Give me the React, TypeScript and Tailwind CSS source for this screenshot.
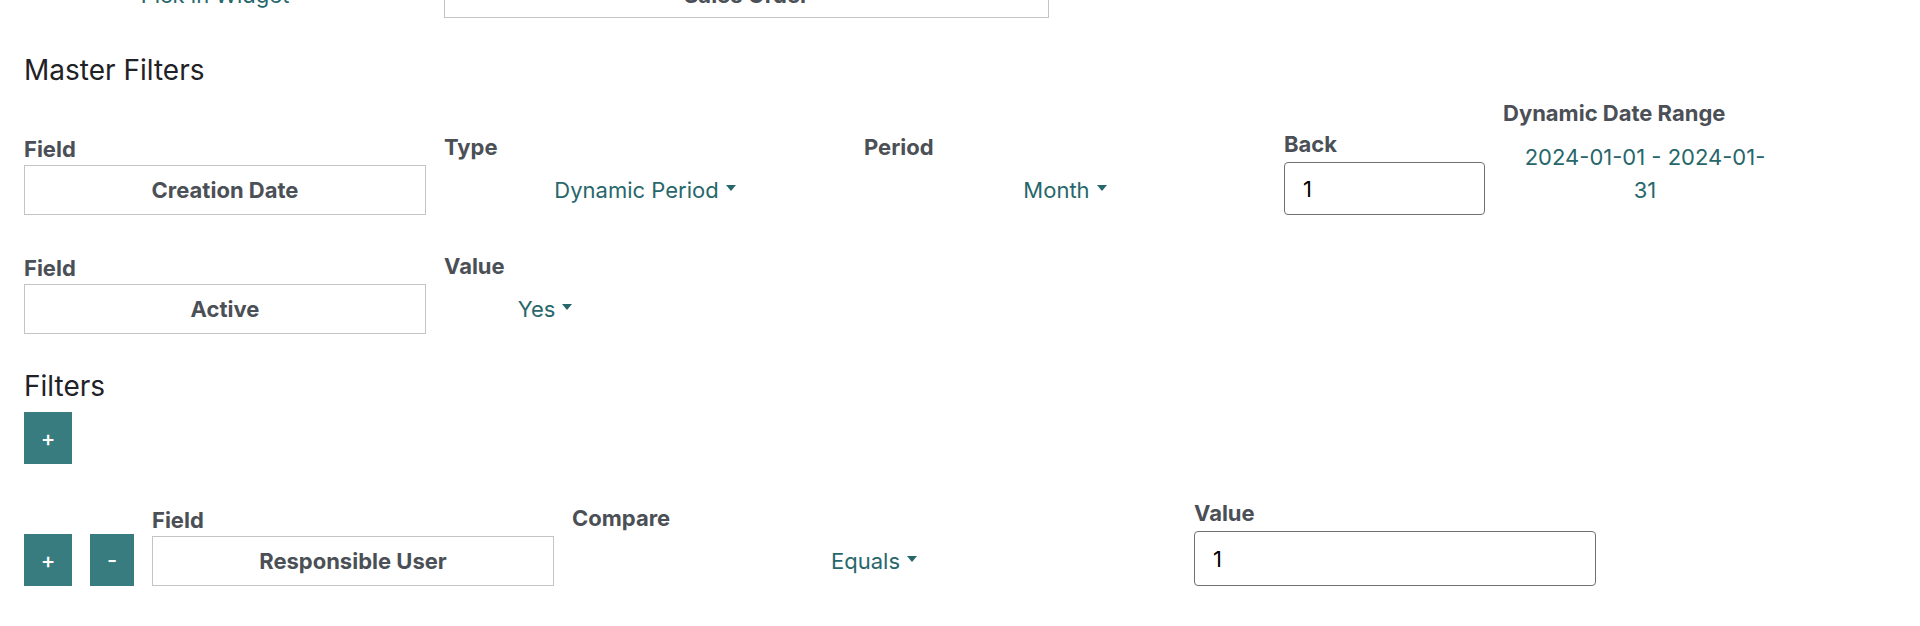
import React from 'react';

const teal = 'text-[#27676b]';

const Caret = () => (
  <span className="inline-block w-0 h-0 border-x-[5px] border-x-transparent border-t-[6px] border-t-[#27676b] ml-[7px] translate-y-[-2px]" />
);

const Label: React.FC<{ children: React.ReactNode; className?: string }> = ({ children, className = '' }) => (
  <div className={`text-[22px] leading-[28px] font-bold text-[#4b4f56] mb-[2px] ${className}`}>{children}</div>
);

const FieldBox: React.FC<{ children: React.ReactNode; w?: string }> = ({ children, w = 'w-[402px]' }) => (
  <div className={`${w} h-[50px] border border-[#c4c4c4] bg-white flex items-center justify-center text-[22px] font-bold text-[#4b4f56]`}>
    {children}
  </div>
);

const Dropdown: React.FC<{ children: React.ReactNode }> = ({ children }) => (
  <button className={`w-full h-[50px] flex items-center justify-center text-[22px] ${teal}`}>
    {children}
    <Caret />
  </button>
);

const NumInput: React.FC<{ w: string; h: string }> = ({ w, h }) => (
  <input
    defaultValue="1"
    className={`${w} ${h} border border-[#707070] rounded-[4px] px-[18px] text-[22px] text-black bg-white outline-none`}
  />
);

const SqButton: React.FC<{ children: React.ReactNode; w?: string }> = ({ children, w = 'w-[48px]' }) => (
  <button className={`${w} h-[52px] bg-[#387c80] text-white text-[22px] font-medium flex items-center justify-center`}>
    {children}
  </button>
);

export default function App() {
  return (
    <div className="min-h-screen bg-white px-6 overflow-hidden font-['Inter','Roboto','Liberation_Sans',sans-serif]">
      {/* row cut off at top */}
      <div className="flex gap-[18px] items-end mt-[-28px]">
        <div className={`w-[402px] h-[46px] flex items-center justify-center text-[22px] pr-[20px] ${teal}`}>Pick in Widget</div>
        <div className="w-[605px] h-[46px] border border-[#c4c4c4] flex items-center justify-center text-[22px] font-bold text-[#4b4f56]">
          Sales Order
        </div>
      </div>

      <h2 className="text-[28px] leading-[34px] text-[#1f2226] mt-[35px]">Master Filters</h2>

      {/* master filter: date */}
      <div className="flex items-end gap-[18px] mt-[12px]">
        <div className="w-[402px]">
          <Label>Field</Label>
          <FieldBox>Creation Date</FieldBox>
        </div>
        <div className="w-[402px]">
          <Label className="mb-[4px]">Type</Label>
          <Dropdown>Dynamic Period</Dropdown>
        </div>
        <div className="w-[402px]">
          <Label className="mb-[4px]">Period</Label>
          <Dropdown>Month</Dropdown>
        </div>
        <div className="w-[201px]">
          <Label className="mb-[4px]">Back</Label>
          <NumInput w="w-[201px]" h="h-[53px]" />
        </div>
        <div className="w-[284px]">
          <Label>Dynamic Date Range</Label>
          <div className={`text-center text-[22px] leading-[33px] px-3 pt-[12px] pb-[8px] ${teal}`}>2024-01-01 - 2024-01-31</div>
        </div>
      </div>

      {/* master filter: active */}
      <div className="flex items-end gap-[18px] mt-[37px]">
        <div className="w-[402px]">
          <Label>Field</Label>
          <FieldBox>Active</FieldBox>
        </div>
        <div className="w-[202px]">
          <Label className="mb-[4px]">Value</Label>
          <Dropdown>Yes</Dropdown>
        </div>
      </div>

      <h2 className="text-[28px] leading-[34px] text-[#1f2226] mt-[35px]">Filters</h2>
      <div className="mt-[9px]">
        <SqButton>+</SqButton>
      </div>

      <div className="flex items-end gap-[18px] mt-[35px]">
        <SqButton>+</SqButton>
        <SqButton w="w-[44px]">-</SqButton>
        <div className="w-[402px]">
          <Label>Field</Label>
          <FieldBox>Responsible User</FieldBox>
        </div>
        <div className="w-[604px]">
          <Label className="mb-[4px]">Compare</Label>
          <Dropdown>Equals</Dropdown>
        </div>
        <div className="w-[402px]">
          <Label className="mb-[4px]">Value</Label>
          <NumInput w="w-[402px]" h="h-[55px]" />
        </div>
      </div>
    </div>
  );
}
